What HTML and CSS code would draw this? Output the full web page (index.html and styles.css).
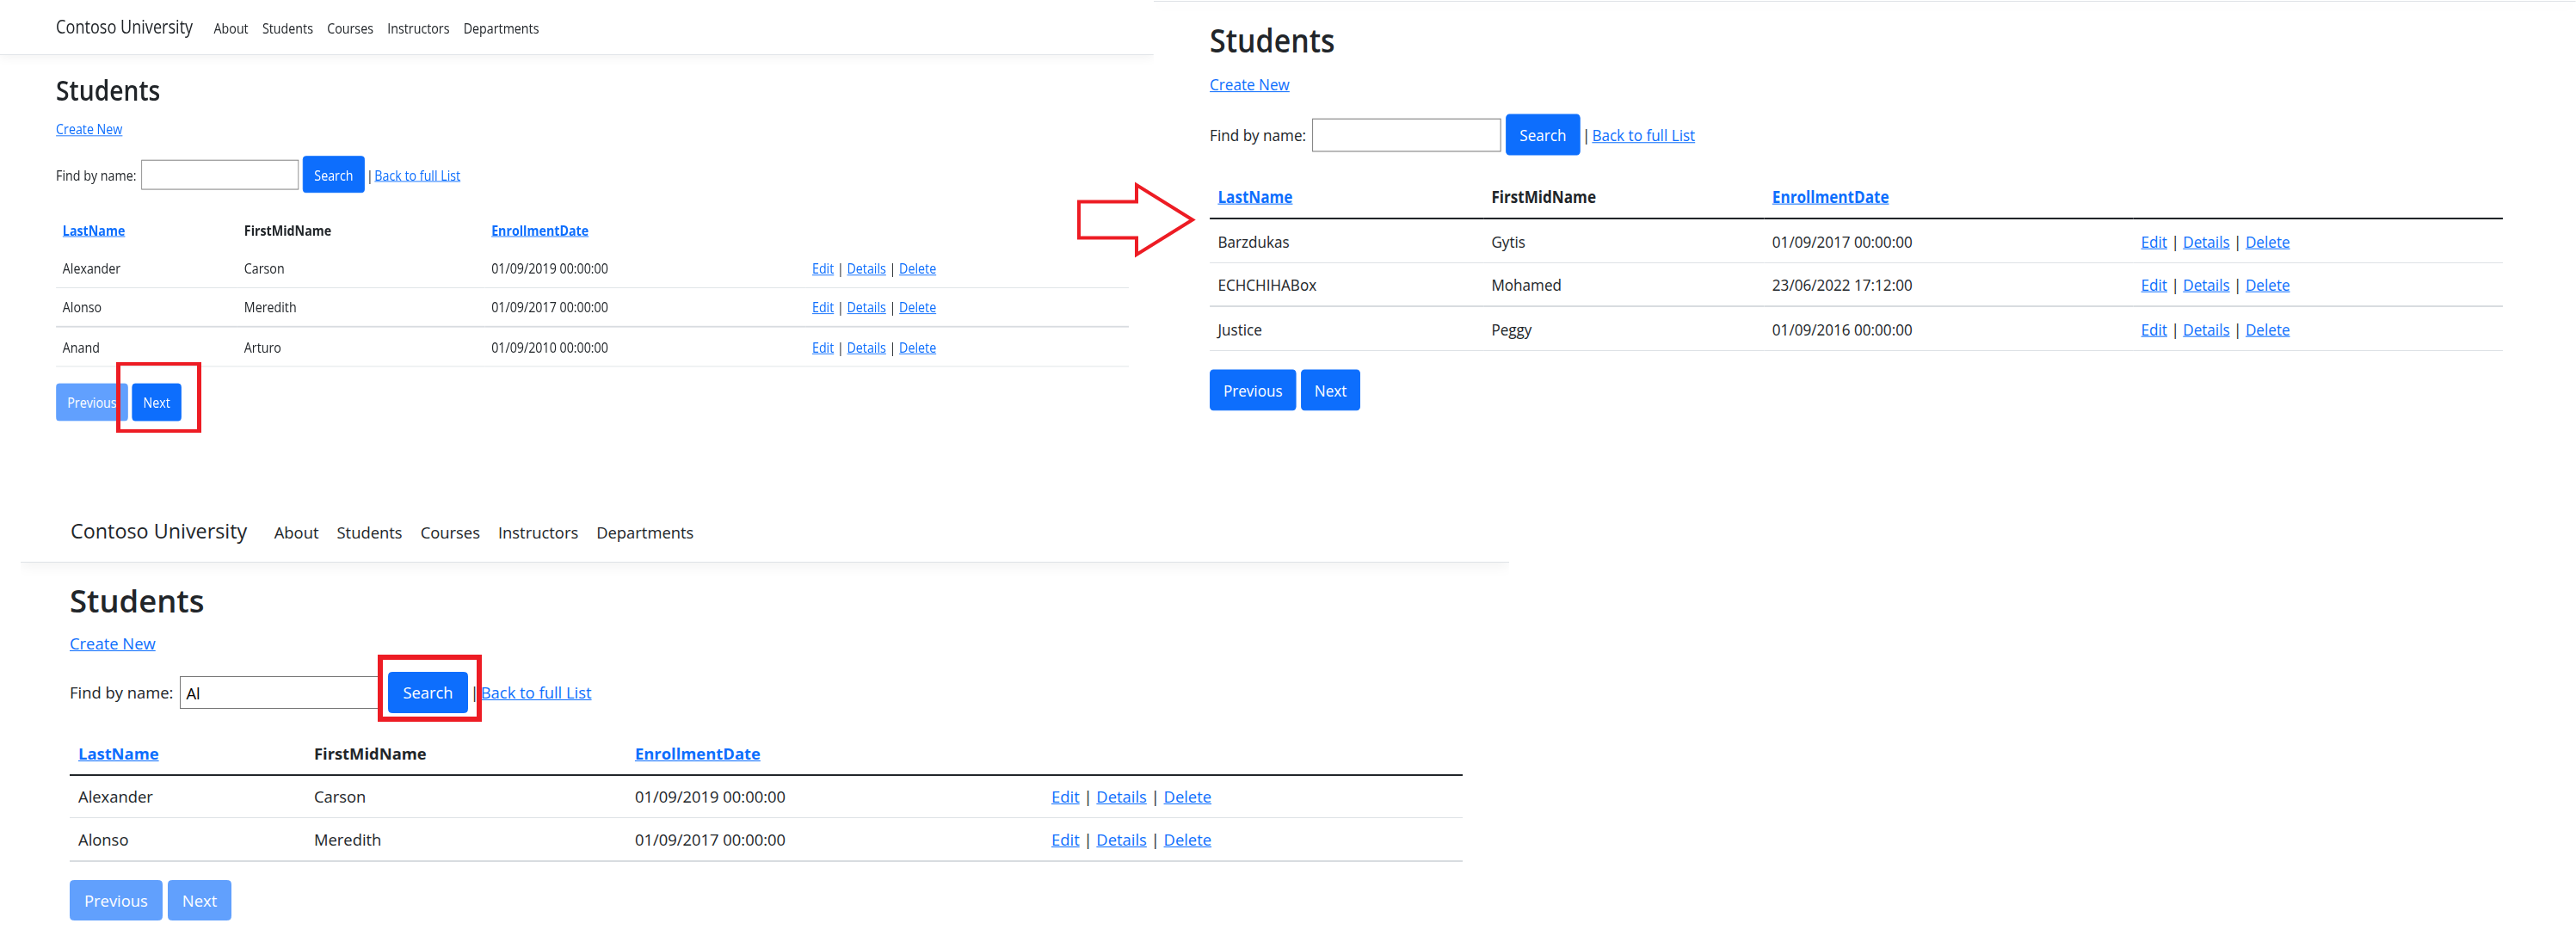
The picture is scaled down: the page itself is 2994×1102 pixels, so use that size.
FILE: index.html
```html
<!DOCTYPE html>
<html lang="en">
<head>
<meta charset="utf-8">
<title>Students - Contoso University</title>
<link rel="stylesheet" href="styles.css">
</head>
<body>
<div class="sheet">

  <section class="shot shot-tl">
    <div class="page page-tl">
      <nav class="navbar navbar-tl">
        <a class="brand" href="#">Contoso University</a>
        <a class="nav-link" href="#">About</a>
        <a class="nav-link" href="#">Students</a>
        <a class="nav-link" href="#">Courses</a>
        <a class="nav-link" href="#">Instructors</a>
        <a class="nav-link" href="#">Departments</a>
      </nav>
      <main class="content content-tl">
        <h1 class="title">Students</h1>
        <p class="create"><a href="#">Create New</a></p>
        <form class="find">
          <span class="find-label">Find by name:</span>
          <input class="find-input" type="text" value="">
          <button class="btn" type="button">Search</button>
          <span class="sep">|</span>
          <a href="#">Back to full List</a>
        </form>
        <table class="grid">
          <colgroup><col class="c1"><col class="c2"><col class="c3"><col class="c4"></colgroup>
          <thead>
            <tr><th><a href="#">LastName</a></th><th>FirstMidName</th><th><a href="#">EnrollmentDate</a></th><th></th></tr>
          </thead>
          <tbody>
            <tr><td>Alexander</td><td>Carson</td><td>01/09/2019 00:00:00</td><td><a href="#">Edit</a> | <a href="#">Details</a> | <a href="#">Delete</a></td></tr>
            <tr><td>Alonso</td><td>Meredith</td><td>01/09/2017 00:00:00</td><td><a href="#">Edit</a> | <a href="#">Details</a> | <a href="#">Delete</a></td></tr>
            <tr><td>Anand</td><td>Arturo</td><td>01/09/2010 00:00:00</td><td><a href="#">Edit</a> | <a href="#">Details</a> | <a href="#">Delete</a></td></tr>
          </tbody>
        </table>
        <div class="pager">
          <button class="btn is-disabled" type="button">Previous</button>
          <button class="btn" type="button">Next</button>
        </div>
      </main>
    </div>
  </section>

  <section class="shot shot-tr">
    <div class="page page-tr">
      <div class="navbar navbar-stub"></div>
      <main class="content content-tr">
        <h1 class="title">Students</h1>
        <p class="create"><a href="#">Create New</a></p>
        <form class="find">
          <span class="find-label">Find by name:</span>
          <input class="find-input" type="text" value="">
          <button class="btn" type="button">Search</button>
          <span class="sep">|</span>
          <a href="#">Back to full List</a>
        </form>
        <table class="grid">
          <colgroup><col class="c1"><col class="c2"><col class="c3"><col class="c4"></colgroup>
          <thead>
            <tr><th><a href="#">LastName</a></th><th>FirstMidName</th><th><a href="#">EnrollmentDate</a></th><th></th></tr>
          </thead>
          <tbody>
            <tr><td>Barzdukas</td><td>Gytis</td><td>01/09/2017 00:00:00</td><td><a href="#">Edit</a> | <a href="#">Details</a> | <a href="#">Delete</a></td></tr>
            <tr><td>ECHCHIHABox</td><td>Mohamed</td><td>23/06/2022 17:12:00</td><td><a href="#">Edit</a> | <a href="#">Details</a> | <a href="#">Delete</a></td></tr>
            <tr><td>Justice</td><td>Peggy</td><td>01/09/2016 00:00:00</td><td><a href="#">Edit</a> | <a href="#">Details</a> | <a href="#">Delete</a></td></tr>
          </tbody>
        </table>
        <div class="pager">
          <button class="btn" type="button">Previous</button>
          <button class="btn" type="button">Next</button>
        </div>
      </main>
    </div>
  </section>

  <section class="shot shot-bottom">
    <div class="page page-bottom">
      <nav class="navbar">
        <a class="brand" href="#">Contoso University</a>
        <a class="nav-link" href="#">About</a>
        <a class="nav-link" href="#">Students</a>
        <a class="nav-link" href="#">Courses</a>
        <a class="nav-link" href="#">Instructors</a>
        <a class="nav-link" href="#">Departments</a>
      </nav>
      <main class="content content-bottom">
        <h1 class="title">Students</h1>
        <p class="create"><a href="#">Create New</a></p>
        <form class="find">
          <span class="find-label">Find by name:</span>
          <input class="find-input" type="text" value="Al">
          <button class="btn" type="button">Search</button>
          <span class="sep">|</span>
          <a href="#">Back to full List</a>
        </form>
        <table class="grid">
          <colgroup><col class="c1"><col class="c2"><col class="c3"><col class="c4"></colgroup>
          <thead>
            <tr><th><a href="#">LastName</a></th><th>FirstMidName</th><th><a href="#">EnrollmentDate</a></th><th></th></tr>
          </thead>
          <tbody>
            <tr><td>Alexander</td><td>Carson</td><td>01/09/2019 00:00:00</td><td><a href="#">Edit</a> | <a href="#">Details</a> | <a href="#">Delete</a></td></tr>
            <tr><td>Alonso</td><td>Meredith</td><td>01/09/2017 00:00:00</td><td><a href="#">Edit</a> | <a href="#">Details</a> | <a href="#">Delete</a></td></tr>
          </tbody>
        </table>
        <div class="pager">
          <button class="btn is-disabled" type="button">Previous</button>
          <button class="btn is-disabled" type="button">Next</button>
        </div>
      </main>
    </div>
  </section>

  <div class="mark mark-next"></div>
  <div class="mark mark-search"></div>
  <svg class="arrow" width="150" height="100" viewBox="1245 205 150 100" aria-hidden="true">
    <polygon points="1254,234.5 1321,234.5 1321,215 1386,255.5 1321,296 1321,276.5 1254,276.5" fill="none" stroke="#ed1c24" stroke-width="4" stroke-linejoin="miter"/>
  </svg>
</div>
</body>
</html>
```

FILE: styles.css
```css
* { box-sizing: border-box; }

html, body {
  margin: 0;
  padding: 0;
  background: #ffffff;
}

body {
  font-family: "Open Sans", "Noto Sans", sans-serif;
  color: #212529;
}

a { color: #0d6efd; text-decoration: underline; }

.sheet {
  position: relative;
  width: 2994px;
  height: 1102px;
  overflow: hidden;
  display: grid;
  grid-template-columns: 1341px 1653px;
  grid-template-rows: 590px 512px;
}

.shot {
  overflow: hidden;
  min-width: 0;
}

.shot-bottom {
  grid-column: 1 / span 2;
  width: 1730px;
  margin-left: 24px;
}

.page {
  transform-origin: 0 0;
  font-size: 18.4px;
  line-height: 27.6px;
}

.page-tl { width: 1730px; transform: scale(0.775, 0.915); }
.page-tr { width: 1777px; transform: scale(0.93, 1.02); }
.page-bottom { width: 1730px; }

/* navbar */
.navbar {
  display: flex;
  align-items: baseline;
  padding: 10px 57px 17.6px 58px;
  border-bottom: 1px solid #dee2e6;
  box-shadow: 0 4.8px 14.4px rgba(0, 0, 0, 0.05);
}
.navbar-tl { padding-top: 16.5px; padding-left: 84px; }
.navbar-stub { height: 2px; padding: 0; }

.brand {
  font-size: 23.35px;
  line-height: 35px;
  margin-right: 21px;
  color: #212529;
  text-decoration: none;
}
.nav-link {
  padding: 0 10.5px;
  color: #212529;
  text-decoration: none;
}

/* content */
.content { padding-top: 23px; }
.content-tl { padding-left: 84px; padding-right: 37px; }
.content-tr { padding-left: 70px; padding-right: 91px; }
.content-bottom { padding-left: 57px; padding-right: 54px; }

.title {
  font-size: 36.4px;
  font-weight: 600;
  line-height: 1.2;
  margin: 0 0 13.3px;
}

.create { margin: 0 0 20px; }

.find {
  display: flex;
  align-items: center;
  height: 48px;
  margin: 0 0 21.5px;
}
.find-label { margin-right: 8px; }
.find-input {
  width: 236px;
  height: 38px;
  border: 1px solid #767676;
  border-radius: 0;
  padding: 0 6px;
  font: inherit;
  color: #000;
  margin-right: 6px;
}
.sep { margin: 0 2px 0 3px; }

.btn {
  font: inherit;
  color: #ffffff;
  background: #0d6efd;
  border: 1px solid #0d6efd;
  border-radius: 4.5px;
  padding: 9px 16px;
}
.btn.is-disabled { opacity: 0.65; }

/* table */
.grid {
  width: 100%;
  table-layout: fixed;
  border-collapse: separate;
  border-spacing: 0;
}
.grid th, .grid td {
  text-align: left;
  vertical-align: top;
  padding: 10.5px 10px;
}
.grid th {
  font-weight: 700;
  padding: 11px 10px 10.4px;
  border-bottom: 2px solid #212529;
}
.grid td { border-bottom: 1px solid #dee2e6; }
.grid tbody tr:nth-child(2) td { border-bottom: 2px solid #d8dce0; }

.content-tl .grid th { border-bottom: 0; }

.c1 { width: 16.92%; }
.c2 { width: 23.04%; }
.c3 { width: 29.9%; }
.c4 { width: 30.14%; }

.content-tr .c1 { width: 21.16%; }
.content-tr .c2 { width: 21.72%; }
.content-tr .c3 { width: 28.53%; }
.content-tr .c4 { width: 28.59%; }

.pager {
  display: flex;
  gap: 6px;
  margin-top: 21px;
}

/* annotations */
.mark {
  position: absolute;
  border: 4px solid #ed1c24;
}
.mark-next {
  left: 135px;
  top: 421px;
  width: 99px;
  height: 82px;
  border-width: 4px 5px;
}
.mark-search {
  left: 439px;
  top: 761px;
  width: 121px;
  height: 78px;
  border-width: 6px;
}
.arrow {
  position: absolute;
  left: 1245px;
  top: 205px;
}
```
